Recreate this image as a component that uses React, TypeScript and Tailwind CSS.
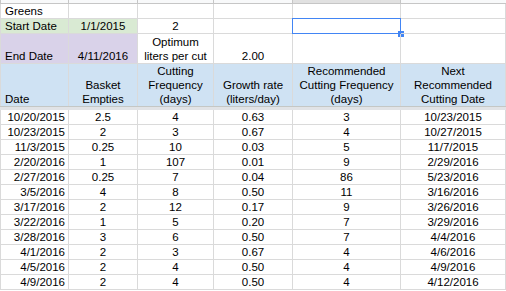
import { ReactNode } from "react"

type CellProps = {
  children?: ReactNode
  className?: string
  align?: "left" | "center" | "right"
}

// one spreadsheet cell, text sits at the bottom like in Sheets
function Cell({ children, className = "", align = "center" }: CellProps) {
  const alignClass =
    align === "left" ? "justify-start text-left pl-[4px]" : align === "right" ? "justify-end text-right pr-[3px]" : "justify-center text-center"
  return (
    <div className={`relative flex items-end border-r border-b border-[#dadada] leading-[14px] whitespace-nowrap ${alignClass} ${className}`}>
      {children}
    </div>
  )
}

const rows = [
  ["10/20/2015", "2.5", "4", "0.63", "3", "10/23/2015"],
  ["10/23/2015", "2", "3", "0.67", "4", "10/27/2015"],
  ["11/3/2015", "0.25", "10", "0.03", "5", "11/7/2015"],
  ["2/20/2016", "1", "107", "0.01", "9", "2/29/2016"],
  ["2/27/2016", "0.25", "7", "0.04", "86", "5/23/2016"],
  ["3/5/2016", "4", "8", "0.50", "11", "3/16/2016"],
  ["3/17/2016", "2", "12", "0.17", "9", "3/26/2016"],
  ["3/22/2016", "1", "5", "0.20", "7", "3/29/2016"],
  ["3/28/2016", "3", "6", "0.50", "7", "4/4/2016"],
  ["4/1/2016", "2", "3", "0.67", "4", "4/6/2016"],
  ["4/5/2016", "2", "4", "0.50", "4", "4/9/2016"],
  ["4/9/2016", "2", "4", "0.50", "4", "4/12/2016"]
]

export default function App() {
  return (
    <div className="w-[506px] h-[291px] overflow-hidden bg-white text-black text-[11.5px] font-['Liberation_Sans',Arial,sans-serif]">
      <div className="grid grid-cols-[69px_69px_76px_79px_108px_1fr]">
        {/* bottom of the column headers */}
        <div className="h-[4px] border-r border-b border-l border-[#c6c6c6] bg-[#f8f9fa]" />
        <div className="h-[4px] border-r border-b border-[#c6c6c6] bg-[#f8f9fa]" />
        <div className="h-[4px] border-r border-b border-[#c6c6c6] bg-[#f8f9fa]" />
        <div className="h-[4px] border-r border-b border-[#c6c6c6] bg-[#f8f9fa]" />
        <div className="h-[4px] border-r border-b border-[#c6c6c6] bg-[#e1e1e1]" />
        <div className="h-[4px] border-b border-[#c6c6c6] bg-[#f8f9fa]" />

        {/* Greens */}
        <Cell align="left" className="h-[15px] border-l">Greens</Cell>
        <Cell className="h-[15px]" />
        <Cell className="h-[15px]" />
        <Cell className="h-[15px]" />
        <Cell className="h-[15px]" />
        <Cell className="h-[15px]" />

        {/* Start Date */}
        <Cell align="left" className="h-[15px] border-l bg-[#d9ead3]">Start Date</Cell>
        <Cell className="h-[15px] bg-[#d9ead3]">1/1/2015</Cell>
        <Cell className="h-[15px]">2</Cell>
        <Cell className="h-[15px]" />
        <Cell className="h-[15px]">
          <div className="absolute -top-px -left-px right-[-1px] bottom-[-1px] border border-[#4285f4]" />
          <div className="absolute right-[-4px] bottom-[-4px] w-[6px] h-[6px] bg-[#4285f4]" />
        </Cell>
        <Cell className="h-[15px]" />

        {/* End Date */}
        <Cell align="left" className="h-[30px] border-l bg-[#d9d2e9]">End Date</Cell>
        <Cell className="h-[30px] bg-[#d9d2e9]">4/11/2016</Cell>
        <Cell className="h-[30px]">
          Optimum
          <br />
          liters per cut
        </Cell>
        <Cell className="h-[30px]">2.00</Cell>
        <Cell className="h-[30px]" />
        <Cell className="h-[30px]" />

        {/* header */}
        <Cell align="left" className="h-[42px] border-b-0 border-l bg-[#cfe2f3]">Date</Cell>
        <Cell className="h-[42px] border-b-0 bg-[#cfe2f3]">
          Basket
          <br />
          Empties
        </Cell>
        <Cell className="h-[42px] border-b-0 bg-[#cfe2f3]">
          Cutting
          <br />
          Frequency
          <br />
          (days)
        </Cell>
        <Cell className="h-[42px] border-b-0 bg-[#cfe2f3]">
          Growth rate
          <br />
          (liters/day)
        </Cell>
        <Cell className="h-[42px] border-b-0 bg-[#cfe2f3]">
          Recommended
          <br />
          Cutting Frequency
          <br />
          (days)
        </Cell>
        <Cell className="h-[42px] border-b-0 bg-[#cfe2f3]">
          Next
          <br />
          Recommended
          <br />
          Cutting Date
        </Cell>

        {/* frozen rows divider */}
        <div className="col-span-6 h-[4px] border-t border-[#c4c7c5] bg-[#e1e3e6]" />

        {rows.map((r) => (
          <div key={r[0]} className="contents">
            <Cell align="right" className="h-[15px] border-l">{r[0]}</Cell>
            <Cell className="h-[15px]">{r[1]}</Cell>
            <Cell className="h-[15px]">{r[2]}</Cell>
            <Cell className="h-[15px]">{r[3]}</Cell>
            <Cell className="h-[15px]">{r[4]}</Cell>
            <Cell className="h-[15px]">{r[5]}</Cell>
          </div>
        ))}
      </div>
    </div>
  )
}
